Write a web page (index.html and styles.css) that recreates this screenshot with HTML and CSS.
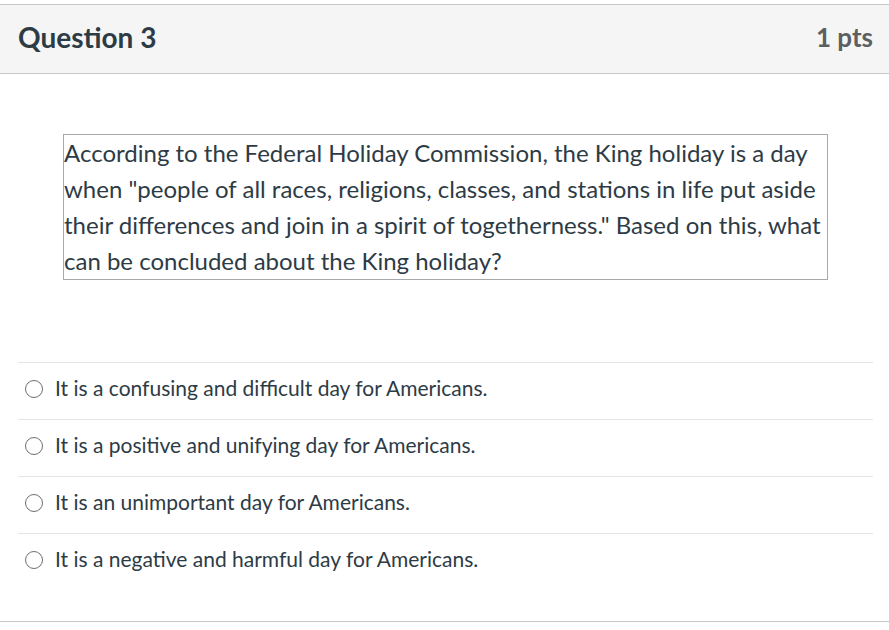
FILE: index.html
```html
<!DOCTYPE html>
<html>
<head>
<meta charset="utf-8">
<link rel="stylesheet" href="styles.css">
</head>
<body>
<div class="question">
  <div class="header">
    <span class="title">Question 3</span>
    <span class="pts">1 pts</span>
  </div>
  <div class="content">
    <div class="prompt">According to the Federal Holiday Commission, the King holiday is a day when "people of all races, religions, classes, and stations in life put aside their differences and join in a spirit of togetherness." Based on this, what can be concluded about the King holiday?</div>
    <div class="answers">
      <label class="answer"><span class="radio"></span><span>It is a confusing and difficult day for Americans.</span></label>
      <label class="answer"><span class="radio"></span><span>It is a positive and unifying day for Americans.</span></label>
      <label class="answer"><span class="radio"></span><span>It is an unimportant day for Americans.</span></label>
      <label class="answer"><span class="radio"></span><span>It is a negative and harmful day for Americans.</span></label>
    </div>
  </div>
</div>
</body>
</html>
```

FILE: styles.css
```css
html, body {
  margin: 0;
  padding: 0;
  background: #fff;
  font-family: Lato, "Liberation Sans", sans-serif;
  color: #2d3b45;
}
.question {
  margin-top: 4px;
  border-top: 1px solid #c4c7ca;
  border-bottom: 1px solid #c4c7ca;
}
.header {
  display: flex;
  justify-content: space-between;
  align-items: center;
  height: 64px;
  padding: 0 16px 4px 18px;
  background: #f5f5f5;
  border-bottom: 1px solid #c4c7ca;
}
.title {
  font-size: 28px;
  font-weight: 700;
  color: #2d3b45;
}
.pts {
  font-size: 26px;
  font-weight: 700;
  color: #5b5f62;
}
.content {
  padding: 60px 16px 31px 18px;
}
.prompt {
  margin-left: 45px;
  width: 763px;
  border: 1px solid #a9a9a9;
  font-size: 24px;
  line-height: 36px;
}
.answers {
  margin-top: 82px;
}
.answer {
  display: flex;
  align-items: center;
  gap: 12px;
  box-sizing: border-box;
  height: 57px;
  border-top: 1px solid #e3e5e7;
  padding-left: 7px;
  padding-bottom: 8px;
  font-size: 21px;
}
.radio {
  width: 16px;
  height: 16px;
  border: 1px solid #6b6f73;
  border-radius: 50%;
  flex: none;
  margin-top: 4px;
}
```
